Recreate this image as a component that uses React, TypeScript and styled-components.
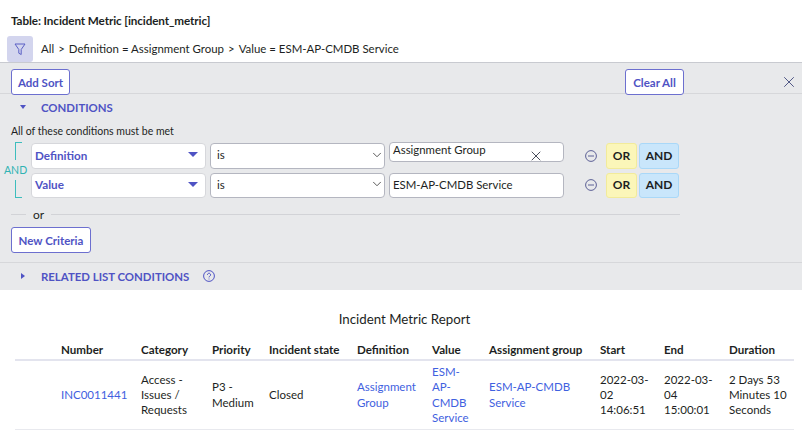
import React from "react";
import styled, { createGlobalStyle } from "styled-components";
import { X, ChevronDown } from "lucide-react";

const Global = createGlobalStyle`
  html, body { margin: 0; padding: 0; background: #fff; overflow: hidden; }
  * { box-sizing: border-box; }
  body { font-family: Lato, "Noto Sans", sans-serif; color: #1d1f23; font-size: 11.5px; }
`;
const Page = styled.div`width: 802px; height: 430px; overflow: hidden; display: flex; flex-direction: column;`;
const Title = styled.div`height: 36px; padding: 14px 0 0 11px; font-size: 11.7px; font-weight: 700; line-height: 13px; letter-spacing: -0.1px;`;
const Crumbs = styled.div`height: 26px; display: flex; align-items: center; padding-left: 7px; font-size: 11.45px; gap: 8px;`;
const FilterBtn = styled.div`width: 26px; height: 26px; border-radius: 3px; background: #d3d5ee; display: flex; align-items: center; justify-content: center; color: #5a5fc4;`;
const CrumbText = styled.span`white-space: pre; padding-bottom: 2px;`;
const CrumbSep = styled.span`margin: 0 4px;`;
const Panel = styled.div`background: #e8e9eb; border-top: 1px solid #c8cad0; height: 228px; display: flex; flex-direction: column;`;
const TopBar = styled.div`height: 31px; border-bottom: 1px solid #d6d7da; display: flex; align-items: flex-start; padding: 6px 0 0 11px; position: relative;`;
const OutlineBtn = styled.button`height: 26px; padding: 0; background: #fff; border: 1px solid #6c6fcf; border-radius: 3px; color: #4f53c4; font: 700 11.5px Lato, sans-serif;`;
const AddSortBtn = styled(OutlineBtn)`width: 59px;`;
const ClearBtn = styled(OutlineBtn)`width: 59px; margin-left: auto; margin-right: 118px;`;
const NewBtn = styled(OutlineBtn)`width: 80px;`;
const CloseIcon = styled.div`position: absolute; right: 4px; top: 10px; color: #4d5484; display: flex;`;
const SectionHead = styled.div`height: 26px; display: flex; align-items: center; color: #4f53c4; font-weight: 700; font-size: 11.4px;`;
const Tri = styled.svg`width: 8px; height: 8px; margin-left: 19px; margin-right: 14px; fill: #4f53c4;`;
const MustBeMet = styled.div`padding: 5px 0 0 11px; line-height: 13px; font-size: 10.5px; height: 23px;`;
const Conditions = styled.div`display: flex; padding-left: 4px; height: 55px;`;
const AndRail = styled.div`width: 27px; position: relative; color: #2fb3b3; text-align: center;`;
const RailTop = styled.div`position: absolute; left: 11px; top: -1px; width: 7px; height: 18px; border: solid #3dbdbd; border-width: 1px 0 0 1px;`;
const RailBottom = styled.div`position: absolute; left: 11px; bottom: 0; width: 7px; height: 18px; border: solid #3dbdbd; border-width: 0 0 1px 1px;`;
const RailLabel = styled.div`position: absolute; left: 0; top: 21px; width: 22px; line-height: 13px; font-size: 10.5px;`;
const Rows = styled.div`display: flex; flex-direction: column; gap: 4px;`;
const Row = styled.div`display: flex; align-items: center; height: 25.5px;`;
const FieldPick = styled.div`width: 175px; height: 25.5px; background: #fff; border: 1px solid #d6d7db; border-radius: 4px; display: flex; align-items: center; justify-content: space-between; padding: 0 7px 2px 3px; color: #4f53c4; font-weight: 700; font-size: 11.7px;`;
const Caret = styled.svg`width: 10px; height: 5px; fill: #4f53c4;`;
const OpPick = styled.div`margin-left: 4px; width: 175px; height: 25.5px; background: #fff; border: 1.5px solid #b4b6c0; border-radius: 4px; display: flex; align-items: center; justify-content: space-between; padding: 0 0 2px 6px; font-size: 11.5px;`;
const ValueField = styled.div<{ $short?: boolean }>`margin-left: 4px; width: 175px; height: ${(p) => (p.$short ? "20px" : "25.5px")}; ${(p) => p.$short && "align-self: flex-start; margin-top: -1px; padding-bottom: 5px !important;"} background: #fff; border: 1px solid #b4b6c0; border-radius: 4px; display: flex; align-items: center; padding: 0 3px 2px; font-size: 11.4px; position: relative;`;
const ValueClear = styled.span`position: absolute; right: 19px; top: 5px; display: flex; color: #3b4150;`;
const Minus = styled.svg`width: 12px; height: 12px; margin-left: 21px; margin-right: 9px; fill: none; stroke: #5c6096;`;
const Logic = styled.div<{ $kind: "or" | "and" }>`height: 25.5px; width: ${(p) => (p.$kind === "or" ? "31px" : "40px")}; margin-right: 2px; border-radius: 3px; font-weight: 700; font-size: 12px; padding-bottom: 1px; display: flex; align-items: center; justify-content: center; background: ${(p) => (p.$kind === "or" ? "#fbf6b9" : "#c9e6fb")}; border: 1px solid ${(p) => (p.$kind === "or" ? "#f2eb9a" : "#a9d8f8")};`;
const OrLine = styled.div`display: flex; align-items: center; margin: 9px 122px 0 11px; height: 15px; gap: 7px;`;
const Rule = styled.div<{ $w?: string }>`height: 1px; background: #d2d3d7; ${(p) => (p.$w ? `width: ${p.$w};` : "flex: 1;")}`;
const OrText = styled.span`font-size: 12px;`;
const NewRow = styled.div`padding: 5px 0 0 11px; height: 40px;`;
const Related = styled.div`border-top: 1px solid #d6d7da; flex: 1; display: flex; align-items: center; color: #4f53c4; font-weight: 700; font-size: 11.4px;`;
const Help = styled.svg`width: 12px; height: 12px; margin-left: 14px; fill: none; stroke: #4f53c4;`;
const ReportTitle = styled.div`margin-top: 21px; height: 16px; line-height: 16px; text-align: center; font-size: 13.3px; padding-left: 7px;`;
const Table = styled.table`margin: 15px 0 0 15px; width: 779px; border-collapse: collapse; table-layout: fixed; font-size: 11.5px; line-height: 15.4px;`;
const Th = styled.th<{ $w: number }>`width: ${(p) => p.$w}px; text-align: left; font-weight: 700; font-size: 11.6px; padding: 0 0 2px 0; height: 18px; border-bottom: 2px solid #e3e4ee;`;
const Td = styled.td<{ $pr?: number }>`padding: 2.5px ${(p) => p.$pr ?? 6}px 3.5px 0; border-bottom: 1px solid #e8e9ee; vertical-align: middle;`;
const A = styled.span`color: #3f61e0;`;

const caret = <Caret viewBox="0 0 10 5"><path d="M0 0h10L5 5z" /></Caret>;
const OpChevron = <ChevronDown size={14} color="#444" strokeWidth={1.5} />;
const MinusIcon = <Minus viewBox="0 0 12 12"><circle cx="6" cy="6" r="5.4" /><path d="M3 6h6" /></Minus>;

export default function App() {
  const cols: [string, number][] = [["", 46], ["Number", 80], ["Category", 71], ["Priority", 57], ["Incident state", 88], ["Definition", 75], ["Value", 57], ["Assignment group", 111], ["Start", 64], ["End", 65], ["Duration", 65]];
  return (
    <Page>
      <Global />
      <Title>Table: Incident Metric [incident_metric]</Title>
      <Crumbs>
        <FilterBtn>
          <svg width="12" height="13" viewBox="0 0 12 13" fill="none" stroke="currentColor" strokeWidth="1"><path d="M1 1h10L7.2 6.5v5L4.8 10.2V6.5z" /></svg>
        </FilterBtn>
        <CrumbText>All<CrumbSep>&gt;</CrumbSep>Definition = Assignment Group<CrumbSep>&gt;</CrumbSep>Value = ESM-AP-CMDB Service</CrumbText>
      </Crumbs>
      <Panel>
        <TopBar>
          <AddSortBtn>Add Sort</AddSortBtn>
          <ClearBtn>Clear All</ClearBtn>
          <CloseIcon><X size={18} strokeWidth={1.3} /></CloseIcon>
        </TopBar>
        <SectionHead>
          <Tri viewBox="0 0 8 8"><path d="M1 2h6L4 6z" /></Tri>CONDITIONS
        </SectionHead>
        <MustBeMet>All of these conditions must be met</MustBeMet>
        <Conditions>
          <AndRail><RailTop /><RailLabel>AND</RailLabel><RailBottom /></AndRail>
          <Rows>
            <Row>
              <FieldPick>Definition{caret}</FieldPick>
              <OpPick>is{OpChevron}</OpPick>
              <ValueField $short>Assignment Group<ValueClear><X size={16} strokeWidth={1.4} /></ValueClear></ValueField>
              {MinusIcon}<Logic $kind="or">OR</Logic><Logic $kind="and">AND</Logic>
            </Row>
            <Row>
              <FieldPick>Value{caret}</FieldPick>
              <OpPick>is{OpChevron}</OpPick>
              <ValueField>ESM-AP-CMDB Service</ValueField>
              {MinusIcon}<Logic $kind="or">OR</Logic><Logic $kind="and">AND</Logic>
            </Row>
          </Rows>
        </Conditions>
        <OrLine><Rule $w="15px" /><OrText>or</OrText><Rule /></OrLine>
        <NewRow><NewBtn>New Criteria</NewBtn></NewRow>
        <Related>
          <Tri viewBox="0 0 8 8"><path d="M2 1v6l4-3z" /></Tri>RELATED LIST CONDITIONS
          <Help viewBox="0 0 12 12"><circle cx="6" cy="6" r="5.4" /><path d="M4.4 4.8a1.6 1.6 0 1 1 2.4 1.4c-.6.3-.8.6-.8 1.2M6 8.6v.8" /></Help>
        </Related>
      </Panel>
      <ReportTitle>Incident Metric Report</ReportTitle>
      <Table>
        <thead>
          <tr>{cols.map(([c, w]) => <Th key={c + w} $w={w}>{c}</Th>)}</tr>
        </thead>
        <tbody>
          <tr>
            <Td />
            <Td><A>INC0011441</A></Td>
            <Td $pr={12}>Access - Issues / Requests</Td>
            <Td>P3 - Medium</Td>
            <Td>Closed</Td>
            <Td><A>Assignment Group</A></Td>
            <Td $pr={15}><A>ESM-AP-CMDB Service</A></Td>
            <Td><A>ESM-AP-CMDB Service</A></Td>
            <Td>2022-03-02 14:06:51</Td>
            <Td>2022-03-04 15:00:01</Td>
            <Td $pr={0}>2 Days 53 Minutes 10 Seconds</Td>
          </tr>
        </tbody>
      </Table>
    </Page>
  );
}
